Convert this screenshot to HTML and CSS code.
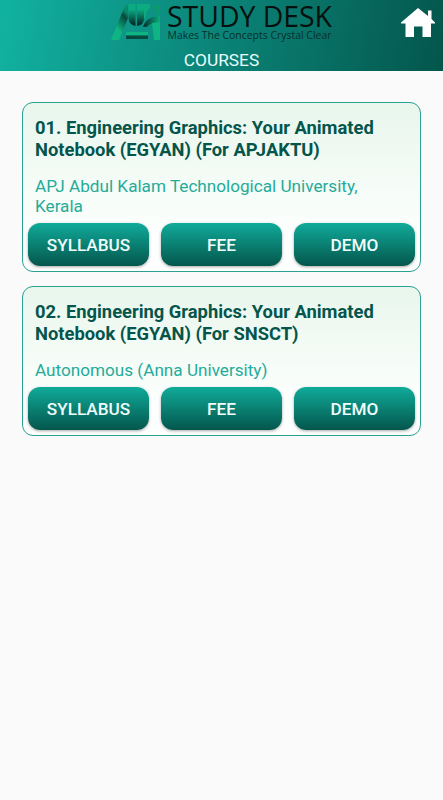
FILE: index.html
```html
<!DOCTYPE html>
<html lang="en">
<head>
    <meta charset="UTF-8">
    <meta name="viewport" content="width=device-width, initial-scale=1.0">
    <title>Study Desk - Courses</title>
    <link rel="stylesheet" href="styles.css">
</head>
<body>

<header class="header">
    <svg class="logo" width="224" height="44" viewBox="0 0 224 44">
        <defs>
            <linearGradient id="leg" x1="0" y1="1" x2="0.5" y2="0">
                <stop offset="0.4" stop-color="#0fb483"/>
                <stop offset="0.85" stop-color="#07483d"/>
                <stop offset="1" stop-color="#0a8a68"/>
            </linearGradient>
            <linearGradient id="stem" x1="0" y1="0" x2="0" y2="1">
                <stop offset="0.25" stop-color="#0bac7f"/>
                <stop offset="0.9" stop-color="#062f2b"/>
            </linearGradient>
            <linearGradient id="arm" x1="0" y1="0" x2="1" y2="0">
                <stop offset="0" stop-color="#062f2b"/>
                <stop offset="1" stop-color="#0bac7f"/>
            </linearGradient>
        </defs>
        <!-- monogram -->
        <path d="M1 40 L14 8 Q15.500 5 18 5 V18 L9 40Z" fill="url(#leg)"/>
        <path d="M18.500 4 H25.500 V26 Q18.500 25 18.500 17Z" fill="url(#stem)"/>
        <path d="M27 4 H34 V18 Q34 25 27 26Z" fill="url(#stem)"/>
        <path d="M34 4 H40 V8 Q36 10 35.500 18 H34Z" fill="#0bac7f"/>
        <path d="M42 5 H50 V15 H46 Q47 9 42 8Z" fill="#0a9973"/>
        <path d="M33 27 Q35 20 42 17.500 L50 16 V22 Q41 22 37 27Z" fill="url(#arm)"/>
        <path d="M42 23 L50 22 V40 H44Z" fill="#0fb483"/>
        <path d="M16 32 H38 V35.500 H16Z" fill="#0fb483"/>
        <path d="M16 35.500 H38 V39 H16Z" fill="#064a40"/>
        <text class="brand" x="57" y="27" textLength="165" lengthAdjust="spacingAndGlyphs">STUDY DESK</text>
        <text class="tagline" x="57.500" y="39" textLength="164" lengthAdjust="spacingAndGlyphs">Makes The Concepts Crystal Clear</text>
    </svg>
    <h1 class="page-title">COURSES</h1>
    <a class="home" href="#" aria-label="Home">
        <svg width="34" height="30" viewBox="0 0 34 30">
            <path d="M17 0 L27 8 V2.500 H30.500 V11 L34 14.500 V15.500 H30 V29 H21.500 V18.500 H13 V29 H4.500 V15.500 H0 V14.500Z" fill="#fff"/>
        </svg>
    </a>
</header>

<main class="courses">
    <section class="card">
        <h2 class="course-title">01. Engineering Graphics: Your Animated Notebook (EGYAN) (For APJAKTU)</h2>
        <p class="university">APJ Abdul Kalam Technological University, Kerala</p>
        <div class="actions">
            <button class="btn">SYLLABUS</button>
            <button class="btn">FEE</button>
            <button class="btn">DEMO</button>
        </div>
    </section>
    <section class="card">
        <h2 class="course-title">02. Engineering Graphics: Your Animated Notebook (EGYAN) (For SNSCT)</h2>
        <p class="university">Autonomous (Anna University)</p>
        <div class="actions">
            <button class="btn">SYLLABUS</button>
            <button class="btn">FEE</button>
            <button class="btn">DEMO</button>
        </div>
    </section>
</main>

</body>
</html>
```
FILE: styles.css
```css
* {
    box-sizing: border-box;
}
body {
    margin: 0;
    min-height: 100vh;
    background-color: #fafafa;
    font-family: Roboto, sans-serif;
}
.header {
    position: relative;
    display: flex;
    flex-direction: column;
    align-items: center;
    height: 71px;
    background: linear-gradient(100deg, #11b2a1 0%, #0b8377 50%, #04564c 100%);
}
.logo {
    display: block;
    overflow: visible;
}
.brand {
    font-family: "Open Sans", sans-serif;
    font-size: 28.5px;
    fill: #06100f;
}
.tagline {
    font-family: "Open Sans", sans-serif;
    font-size: 10px;
    fill: #06302c;
}
.page-title {
    margin: 5px 0 0;
    color: #e9fffc;
    font-size: 17.3px;
    font-weight: 400;
    line-height: 22px;
}
.home {
    position: absolute;
    top: 8px;
    right: 8px;
}
.home svg {
    display: block;
}
.courses {
    display: flex;
    flex-direction: column;
    gap: 14px;
    padding: 31px 22px;
}
.card {
    padding: 14px 5px 5px;
    border: 1px solid #2ba193;
    border-radius: 11px;
    background: linear-gradient(180deg, #e8f6ec, #fcfffd 75%);
}
.course-title {
    margin: 0 7px;
    color: #04554b;
    font-size: 18.35px;
    font-weight: 700;
    line-height: 22px;
}
.university {
    margin: 15px 7px 7px;
    color: #25ab99;
    font-size: 17.15px;
    line-height: 20px;
}
.actions {
    display: flex;
    gap: 12px;
}
.btn {
    flex: 1;
    height: 43px;
    padding: 0;
    border: none;
    border-radius: 12px;
    background: linear-gradient(#10ab9a, #04564c);
    box-shadow: 0 1px 3px rgba(0, 0, 0, 0.35);
    color: #f0fffd;
    font-family: inherit;
    font-size: 17.2px;
    font-weight: 500;
    cursor: pointer;
}
```
